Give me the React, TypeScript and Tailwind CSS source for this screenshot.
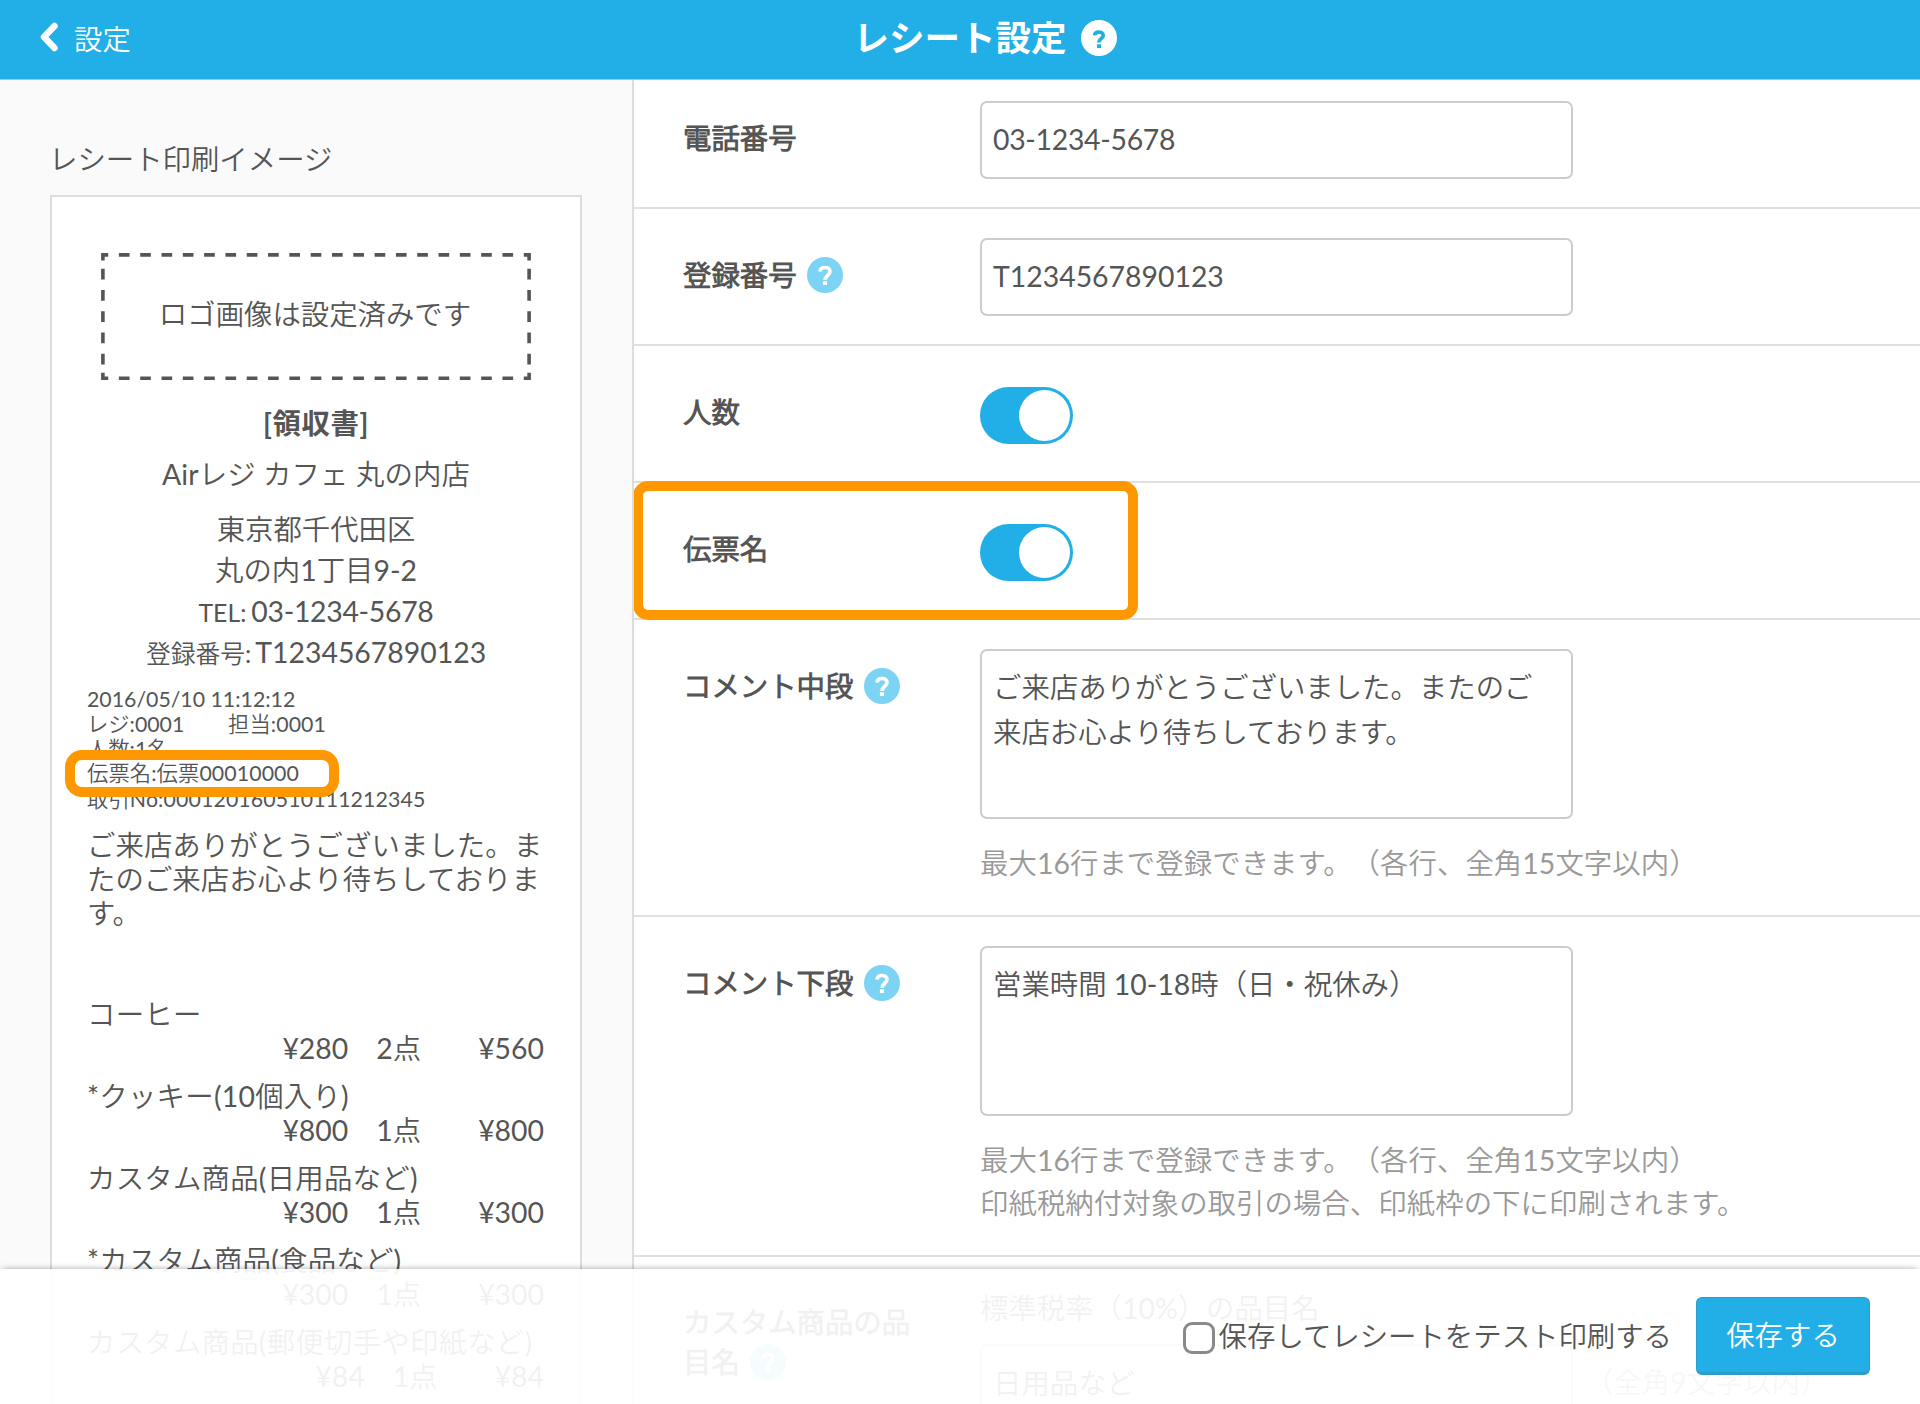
import type { ReactNode } from "react";

const items = [
  { name: "コーヒー", price: "¥280", qty: "2点", total: "¥560" },
  { name: "*クッキー(10個入り)", price: "¥800", qty: "1点", total: "¥800" },
  { name: "カスタム商品(日用品など)", price: "¥300", qty: "1点", total: "¥300" },
  { name: "*カスタム商品(食品など)", price: "¥300", qty: "1点", total: "¥300" },
  { name: "カスタム商品(郵便切手や印紙など)", price: "¥84", qty: "1点", total: "¥84" },
];

function HelpIcon({ inverted = false }: { inverted?: boolean }) {
  return (
    <svg viewBox="0 0 36 36" className="h-9 w-9 shrink-0">
      <circle cx="18" cy="18" r="18" fill={inverted ? "#ffffff" : "#7dd3f3"} />
      <path
        d={inverted ? "M13.600 15.400c.2-2.200 1.900-3.300 4.300-3.300s4.300 1.200 4.300 3.300c0 2.900-4.300 3.200-4.300 7.200" : "M13 14.600c.2-2.600 2.200-4.100 5-4.100s5 1.500 5 4.100c0 3.600-5 3.900-5 8.300"}
        fill="none"
        stroke={inverted ? "#22aee6" : "#ffffff"}
        strokeWidth="3.700"
      />
      <rect x="15.900" y="24.300" width="4.100" height="3.700" fill={inverted ? "#22aee6" : "#ffffff"} />
    </svg>
  );
}

function Row({ label, help = false, height, children }: { label: string; help?: boolean; height: string; children: ReactNode }) {
  return (
    <div className={`flex shrink-0 border-b-2 border-[#dfdfdf] pl-[49px] ${height}`}>
      <div className="flex h-10 w-[297px] shrink-0 items-center gap-[10.500px] font-bold">
        <span>{label}</span>
        {help && <HelpIcon />}
      </div>
      {children}
    </div>
  );
}

function Switch() {
  return (
    <div className="-mt-[5px] flex h-[57px] w-[93px] items-center justify-end rounded-full bg-[#22aee6] pr-[3px]">
      <div className="h-[51px] w-[51px] rounded-full bg-white" />
    </div>
  );
}

function LogoFrame() {
  return (
    <div className="relative mx-auto flex h-[128px] w-[430px] items-center justify-center">
      <svg viewBox="0 0 430 128" className="absolute inset-0 h-full w-full" fill="none" stroke="#555555" strokeWidth="3.600">
        <path d="M1.900 1.900H428.100M1.900 125.300H428.100" strokeDasharray="10.650 10.660" strokeDashoffset="5.320" />
        <path d="M1.900 0V127M428.100 0V127" strokeDasharray="7.500 8.300 10.650 10.600 10.650 10.600 10.650 10.600 10.650 10.600 10.650 8.300 20" />
      </svg>
      <span className="-mt-[7px] -ml-[2px]">ロゴ画像は設定済みです</span>
    </div>
  );
}

export default function App() {
  return (
    <div className="relative flex h-[1404px] w-[1920px] flex-col overflow-hidden bg-white font-['Lato','Noto_Sans_CJK_JP_DemiLight','Noto_Sans_CJK_JP',sans-serif] text-[28.4px] leading-10 font-normal whitespace-nowrap text-[#555555] [text-spacing-trim:space-all]">
      <header className="grid h-20 shrink-0 grid-cols-[1fr_auto_1fr] items-center border-b border-[#7fd3f3] bg-[#22aee6] text-white">
        <div className="-mt-[2px] flex items-center gap-[16px] pl-10">
          <svg viewBox="0 0 18 30" className="-mt-[4px] h-[30px] w-[18px]" fill="none" stroke="currentColor" strokeWidth="6.500" strokeLinecap="round" strokeLinejoin="round">
            <path d="M14.500 4L4 15l10.500 11" />
          </svg>
          <span>設定</span>
        </div>
        <div className="-mt-[3px] flex items-center gap-[14px] pl-[50px]">
          <h1 className="-mt-[4px] font-['Noto_Sans_CJK_JP',sans-serif] text-[35.5px] font-bold">レシート設定</h1>
          <HelpIcon inverted />
        </div>
      </header>

      <main className="flex min-h-0 flex-1">
        <section className="w-[634px] shrink-0 overflow-hidden border-r-2 border-[#dddddd] bg-[#fafafa] pt-[59px] pl-[50px]">
          <h2 className="-ml-px">レシート印刷イメージ</h2>
          <div className="mt-4 h-[1300px] w-[532px] border-2 border-[#dddddd] bg-white pt-14">
            <LogoFrame />
            <p className="mt-[22px] text-center font-['Lato','Noto_Sans_CJK_JP',sans-serif] font-bold tracking-[0.600px]">[領収書]</p>
            <p className="mt-[11px] text-center tracking-[0.100px]">Airレジ カフェ 丸の内店</p>
            <div className="mt-[15px] text-center leading-[41px]">
              <p>東京都千代田区</p>
              <p>丸の内1丁目9-2</p>
              <p><span className="text-[24.800px]">TEL:</span><span className="ml-[5px] tracking-[-0.300px]">03-1234-5678</span></p>
              <p className="-mt-px"><span className="text-[24.800px]">登録番号:</span><span className="ml-[4px]">T1234567890123</span></p>
            </div>
            <div className="relative mt-[13px] pl-[35px] text-[21.300px] leading-[24.800px]">
              <p>2016/05/10 11:12:12</p>
              <p className="flex"><span className="w-[141px]">レジ:0001</span><span className="tracking-[0.100px]">担当:0001</span></p>
              <p>人数:1名</p>
              <p className="tracking-[0.100px]">伝票名:伝票00010000</p>
              <p className="mt-px tracking-[0.120px]">取引No:000120160510111212345</p>
              <div className="absolute top-[63px] left-[13px] h-[47px] w-[274px] rounded-[17px] border-[10px] border-[#ff9800]" />
            </div>
            <p className="mt-[16px] pl-[35px] leading-[34px] tracking-[0.060px]">
              ご来店ありがとうございました。ま<br />たのご来店お心より待ちしておりま<br />す。
            </p>
            <ul className="mt-[67px] pr-[36px] pl-[35px]">
              {items.map((item) => (
                <li key={item.name} className="mb-[13px]">
                  <p className="leading-[34px] tracking-[0.250px]">{item.name}</p>
                  <p className="flex justify-end leading-[35px]">
                    <span>{item.price}</span>
                    <span className="ml-[28px]">{item.qty}</span>
                    <span className="ml-[57px]">{item.total}</span>
                  </p>
                </li>
              ))}
            </ul>
          </div>
        </section>

        <section className="flex flex-1 flex-col overflow-hidden">
          <Row label="電話番号" height="h-[129px] pt-[38px]">
            <div className="-mt-[17px] h-[78px] w-[593px] rounded-[7px] border-2 border-[#cccccc] px-[11px] leading-[72px] tracking-[-0.300px]">03-1234-5678</div>
          </Row>
          <Row label="登録番号" help height="h-[137px] pt-[46px]">
            <div className="-mt-[17px] h-[78px] w-[593px] rounded-[7px] border-2 border-[#cccccc] px-[11px] leading-[72px]">T1234567890123</div>
          </Row>
          <Row label="人数" height="h-[137px] pt-[46px]"><Switch /></Row>
          <div className="relative">
            <Row label="伝票名" height="h-[137px] pt-[46px]"><Switch /></Row>
            <div className="absolute -top-[2px] -left-px h-[139px] w-[505px] rounded-[15px] border-[10px] border-[#ff9800]" />
          </div>
          <Row label="コメント中段" help height="h-[297px] pt-[46px]">
            <div>
              <div className="-mt-[17px] h-[170px] w-[593px] rounded-[7px] border-2 border-[#cccccc] px-[11px] pt-[14px] leading-[44.700px]">
                ご来店ありがとうございました。またのご<br />来店お心より待ちしております。
              </div>
              <p className="mt-[23px] leading-[42px] tracking-[0.060px] text-[#999999]">最大16行まで登録できます。（各行、全角15文字以内）</p>
            </div>
          </Row>
          <Row label="コメント下段" help height="h-[340px] pt-[46px]">
            <div>
              <div className="-mt-[17px] h-[170px] w-[593px] rounded-[7px] border-2 border-[#cccccc] px-[11px] pt-[14px] leading-[44.700px]">
                営業時間 10-18時（日・祝休み）
              </div>
              <p className="mt-[23px] leading-[42.600px] tracking-[0.060px] text-[#999999]">
                最大16行まで登録できます。（各行、全角15文字以内）<br />印紙税納付対象の取引の場合、印紙枠の下に印刷されます。
              </p>
            </div>
          </Row>
          <div className="flex pt-[46px] pl-[49px]">
            <div className="w-[297px] shrink-0 leading-[39.600px] font-bold">
              <p>カスタム商品の品</p>
              <p className="flex items-center gap-[10px]">目名<HelpIcon /></p>
            </div>
            <div>
              <p className="-mt-[15px]">標準税率（10%）の品目名</p>
              <div className="mt-4 flex items-center gap-3">
                <div className="h-[78px] w-[593px] shrink-0 rounded-[7px] border-2 border-[#cccccc] px-[11px] leading-[74px]">日用品など</div>
                <span className="-mt-[2px] text-[#999999]">（全角9文字以内）</span>
              </div>
            </div>
          </div>
        </section>
      </main>

      <footer className="absolute inset-x-0 bottom-0 flex h-[135px] items-start justify-end bg-white/92 pr-[50px] shadow-[0_-3px_6px_-3px_rgba(0,0,0,0.35)]">
        <label className="mt-[47px] flex items-center gap-1">
          <span className="mt-[3px] h-8 w-8 rounded-[9px] border-[3px] border-[#8a8a8a] bg-white" />
          保存してレシートをテスト印刷する
        </label>
        <button className="mt-[28px] ml-[24px] h-[78px] w-[174px] rounded-[6px] border border-b-[3px] border-[#2f9bcb] bg-[#22aee6] pb-px text-white">
          保存する
        </button>
      </footer>
    </div>
  );
}
